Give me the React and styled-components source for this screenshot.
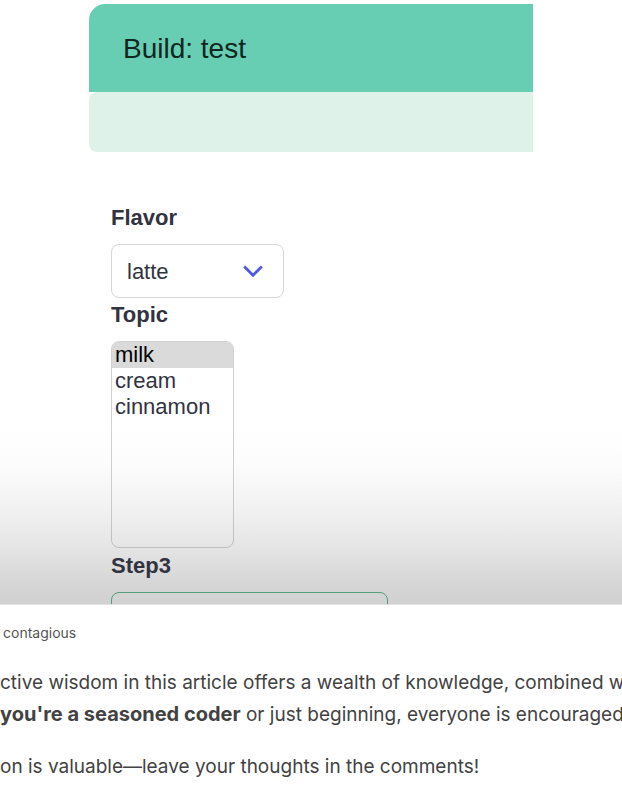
import React from "react";
import styled, { createGlobalStyle } from "styled-components";

const GlobalStyle = createGlobalStyle`
  *, *::before, *::after { box-sizing: border-box; }
  body { margin: 0; background: #fff; overflow-x: hidden; }
`;

const Page = styled.main`
  overflow: hidden;
`;

const Figure = styled.figure`
  margin: 0;
`;

const Preview = styled.div`
  height: 605px;
  padding: 4px 89px 0;
  overflow: hidden;
  border-bottom: 1px solid #e4e4e4;
  background: linear-gradient(#fff 70%, #fcfcfc 77%, #f0f0f0 85%, #e4e4e4 91%, #d5d5d5 97%, #d1d1d1);
  color: #31333f;
  font-family: "Liberation Sans", Arial, sans-serif;
  font-size: 22px;
`;

const Banner = styled.header`
  padding: 2px 34px 0;
  border-radius: 16px 0 0 0;
  background: #68ceb3;
`;

const BannerTitle = styled.h1`
  margin: 0;
  color: #10261f;
  font-size: 28px;
  font-weight: 400;
  line-height: 86px;
`;

const Notice = styled.div`
  height: 60px;
  border-radius: 8px 0 0 8px;
  background: #def2e9;
`;

const Form = styled.form`
  display: flex;
  flex-direction: column;
  align-items: flex-start;
  padding: 48px 22px 0;
`;

const Label = styled.label`
  height: 44px;
  padding-top: 4px;
  font-weight: 700;
  line-height: 28px;
`;

const SelectBox = styled.div`
  display: grid;
  align-items: center;
  width: 173px;
  margin-bottom: -1px;

  > * { grid-area: 1 / 1; }
`;

const Select = styled.select`
  appearance: none;
  height: 54px;
  padding: 0 15px;
  border: 1px solid #d6d6da;
  border-radius: 8px;
  background: #fff;
  color: inherit;
  font: inherit;
`;

const Chevron = styled.svg`
  justify-self: end;
  width: 20px;
  height: 12px;
  margin-right: 21px;
  pointer-events: none;
`;

const ListBox = styled.select`
  width: 123px;
  height: 207px;
  padding: 0;
  border: 1px solid rgba(90, 90, 100, 0.28);
  border-radius: 8px;
  background: transparent;
  color: inherit;
  font: inherit;
  overflow: hidden;

  option {
    min-height: 26px;
    padding: 0 3px;
    line-height: 26px;
  }

  option:checked {
    background: #dadada linear-gradient(#dadada, #dadada);
    color: #000;
  }
`;

const TextField = styled.input`
  width: 277px;
  height: 54px;
  padding: 0 14px;
  border: 1px solid #559e7c;
  border-radius: 8px;
  background: transparent;
  font: inherit;
`;

const Caption = styled.figcaption`
  padding: 17px 3px 0;
  color: #545454;
  font: 14px/22px Inter, sans-serif;
  white-space: nowrap;
`;

const Article = styled.article`
  padding-top: 23px;
  color: #424242;
  font: 19px/32px Inter, sans-serif;
  white-space: nowrap;
`;

const Paragraph = styled.p`
  margin: 0 0 20px;
`;

const Strong = styled.strong`
  font-size: 20px;
  line-height: 1;
`;

export default function App() {
  return (
    <Page>
      <GlobalStyle />
      <Figure>
        <Preview>
          <Banner>
            <BannerTitle>Build: test</BannerTitle>
          </Banner>
          <Notice />
          <Form>
            <Label htmlFor="flavor">Flavor</Label>
            <SelectBox>
              <Select id="flavor" defaultValue="latte">
                <option>latte</option>
              </Select>
              <Chevron viewBox="0 0 20 12" aria-hidden="true">
                <path d="M1.2 1.5 10 10.3 18.8 1.5" fill="none" stroke="#4d59e6" strokeWidth="2.8" />
              </Chevron>
            </SelectBox>
            <Label htmlFor="topic">Topic</Label>
            <ListBox id="topic" multiple size={8} defaultValue={["milk"]}>
              <option>milk</option>
              <option>cream</option>
              <option>cinnamon</option>
            </ListBox>
            <Label htmlFor="step3">Step3</Label>
            <TextField id="step3" type="text" />
          </Form>
        </Preview>
        <Caption>contagious</Caption>
      </Figure>
      <Article>
        <Paragraph>
          ctive wisdom in this article offers a wealth of knowledge, combined w
          <br />
          <Strong>you're a seasoned coder</Strong> or just beginning, everyone is encouraged
        </Paragraph>
        <Paragraph>on is valuable—leave your thoughts in the comments!</Paragraph>
      </Article>
    </Page>
  );
}
